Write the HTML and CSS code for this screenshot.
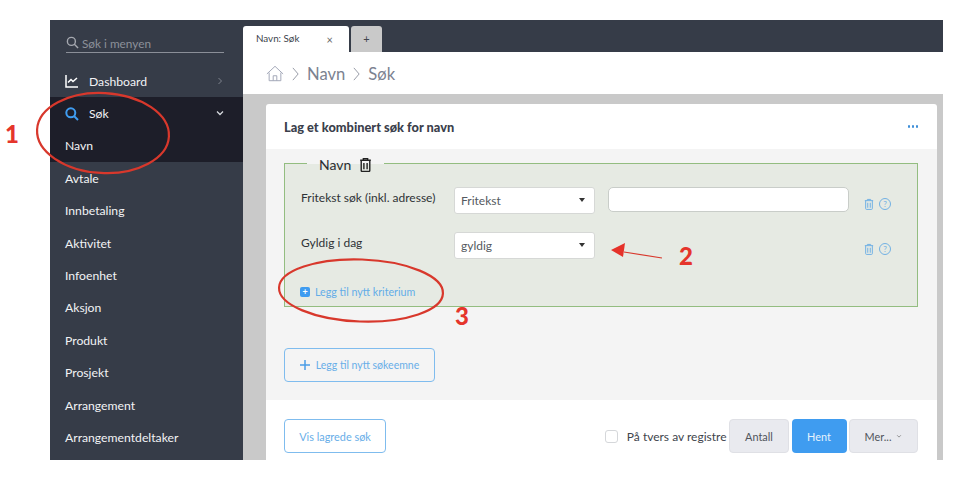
FILE: index.html
```html
<!DOCTYPE html>
<html lang="no">
<head>
<meta charset="utf-8">
<title>Navn: Søk</title>
<link rel="stylesheet" href="styles.css">
</head>
<body>
<div class="app">
  <aside class="sidebar">
    <div class="menu-search">
      <svg class="i-search-small" viewBox="0 0 14 14"><circle cx="5.8" cy="5.8" r="4.3"/><path d="M9 9l4 4"/></svg>
      <span>Søk i menyen</span>
    </div>
    <nav class="menu">
      <div class="item">
        <svg class="i-left" viewBox="0 0 14 14"><path d="M1 1v12h12"/><path d="M3 8.500l3-3 2 2 4-3.500"/></svg>
        <span class="label-ic">Dashboard</span>
        <svg class="chev" viewBox="0 0 8 8"><path d="M2.500 1l3 3-3 3"/></svg>
      </div>
      <div class="group">
        <div class="item">
          <svg class="i-left i-blue" viewBox="0 0 14 14"><circle cx="5.800" cy="5.800" r="4.500"/><path d="M9 9l4 4"/></svg>
          <span class="label-ic">Søk</span>
          <svg class="chev chev-open" viewBox="0 0 8 8"><path d="M1 2.500l3 3 3-3"/></svg>
        </div>
        <div class="item">Navn</div>
      </div>
      <div class="item">Avtale</div>
      <div class="item">Innbetaling</div>
      <div class="item">Aktivitet</div>
      <div class="item">Infoenhet</div>
      <div class="item">Aksjon</div>
      <div class="item">Produkt</div>
      <div class="item">Prosjekt</div>
      <div class="item">Arrangement</div>
      <div class="item">Arrangementdeltaker</div>
    </nav>
  </aside>
  <main class="main">
    <div class="tabs">
      <div class="tab tab-active"><span>Navn: Søk</span><span class="tab-x">×</span></div>
      <div class="tab tab-add">+</div>
    </div>
    <div class="crumbs">
      <svg class="i-home" viewBox="0 0 20 18"><path d="M1 9.500L10 1l9 8.500"/><path d="M3.500 8v9h13V8"/><path d="M8 17v-5.500h4V17"/></svg>
      <svg class="crumb-sep" viewBox="0 0 8 16"><path d="M1 1l6 7-6 7"/></svg>
      <span>Navn</span>
      <svg class="crumb-sep" viewBox="0 0 8 16"><path d="M1 1l6 7-6 7"/></svg>
      <span>Søk</span>
    </div>
    <div class="content">
      <section class="card">
        <header class="card-head">
          <h1>Lag et kombinert søk for navn</h1>
          <span class="dots"><i></i><i></i><i></i></span>
        </header>
        <div class="card-body">
          <fieldset class="criteria">
            <legend>
              <span>Navn</span>
              <svg class="i-trash i-trash-dark" viewBox="0 0 12 14"><path d="M1 3h10M4 3V1.500h4V3M2 3v9.500a1 1 0 0 0 1 1h6a1 1 0 0 0 1-1V3M4.500 5.500v6M7.500 5.500v6"/></svg>
            </legend>
            <div class="row row-first">
              <label>Fritekst søk (inkl. adresse)</label>
              <div class="select"><span>Fritekst</span><i class="caret"></i></div>
              <div class="input"></div>
              <div class="row-icons">
                <svg class="i-trash" viewBox="0 0 12 14"><path d="M1 3h10M4 3V1.500h4V3M2 3v9.500a1 1 0 0 0 1 1h6a1 1 0 0 0 1-1V3M4.500 5.500v6M7.500 5.500v6"/></svg>
                <span class="help">?</span>
              </div>
            </div>
            <div class="row">
              <label>Gyldig i dag</label>
              <div class="select"><span>gyldig</span><i class="caret"></i></div>
              <div class="spacer"></div>
              <div class="row-icons">
                <svg class="i-trash" viewBox="0 0 12 14"><path d="M1 3h10M4 3V1.500h4V3M2 3v9.500a1 1 0 0 0 1 1h6a1 1 0 0 0 1-1V3M4.500 5.500v6M7.500 5.500v6"/></svg>
                <span class="help">?</span>
              </div>
            </div>
            <div class="add-criterion"><span class="plus-box">+</span><span>Legg til nytt kriterium</span></div>
          </fieldset>
          <button class="btn-outline btn-add" type="button"><svg class="plus" viewBox="0 0 10 10"><path d="M5 0v10M0 5h10"/></svg>Legg til nytt søkeemne</button>
        </div>
        <footer class="card-foot">
          <button class="btn-outline btn-saved" type="button">Vis lagrede søk</button>
          <div class="foot-right">
            <span class="check"></span>
            <span class="check-label">På tvers av registre</span>
            <button class="btn-gray btn-count" type="button">Antall</button>
            <button class="btn-primary" type="button">Hent</button>
            <button class="btn-gray btn-more" type="button">Mer... <svg viewBox="0 0 8 8"><path d="M1.500 3l2.500 2.500L6.500 3"/></svg></button>
          </div>
        </footer>
      </section>
    </div>
  </main>
</div>
<svg class="marks" viewBox="0 0 960 488">
  <ellipse cx="103" cy="133" rx="66" ry="40" transform="rotate(3 103 133)"/>
  <ellipse cx="361" cy="290.500" rx="82" ry="31" transform="rotate(2 361 290.500)"/>
  <path class="thin" d="M662 258l-38-6"/>
  <path class="fill" d="M611 250l14-7-2 14z"/>
</svg>
<span class="num num-1">1</span>
<span class="num num-2">2</span>
<span class="num num-3">3</span>
</body>
</html>
```
FILE: styles.css
```css
* { box-sizing: border-box; }
html, body { margin: 0; height: 100%; }
body {
  position: relative;
  width: 960px;
  height: 488px;
  padding: 20px 17px 28px 50px;
  background: #fff;
  font-family: Lato, "Open Sans", sans-serif;
  overflow: hidden;
}
.app { display: flex; height: 440px; overflow: hidden; }

.sidebar { width: 193px; flex: none; background: #363c48; color: #f2f3f5; font-size: 12.200px; }
.menu-search {
  display: flex; align-items: center; gap: 3px;
  margin: 15px 19px 0 16px; height: 18px;
  border-bottom: 1px solid #8b8f98; color: #8d919a; font-size: 11.800px;
}
.i-search-small { width: 13px; height: 13px; margin-top: -2px; fill: none; stroke: #a6a9b0; stroke-width: 1.500; }
.menu { margin-top: 12px; }
.item { display: flex; align-items: center; height: 32.400px; padding: 0 19px 0 15px; }
.group { background: #1d1e29; }
.i-left { width: 14px; height: 14px; margin-right: 10px; fill: none; stroke: #fff; stroke-width: 1.500; }
.i-blue { stroke: #3f9cf0; stroke-width: 2; }
.label-ic { flex: 1; }
.chev { width: 8px; height: 8px; fill: none; stroke: #7e838d; stroke-width: 1; }
.chev-open { stroke: #d5d8dd; stroke-width: 1.300; margin-top: -2px; }

.main { flex: 1; min-width: 0; display: flex; flex-direction: column; background: #c9c9c9; }
.tabs { height: 32px; flex: none; display: flex; align-items: flex-end; gap: 2px; background: #363c48; }
.tab { height: 26px; border-radius: 3px 3px 0 0; font-size: 9.800px; color: #40444c; }
.tab-active { width: 106px; background: #fff; display: flex; align-items: center; justify-content: space-between; padding: 0 16px 2px 13px; }
.tab-x { font-size: 11px; color: #666; margin-top: 3px; }
.tab-add { width: 31px; background: #c9c9c9; display: flex; align-items: center; justify-content: center; font-size: 11px; padding-bottom: 2px; }
.crumbs { height: 42px; flex: none; background: #fff; display: flex; align-items: center; gap: 8px; padding: 1px 0 0 23px; color: #7b8290; font-size: 16.600px; }
.i-home { width: 18px; height: 17px; fill: none; stroke: #a3a8b8; stroke-width: 1.100; }
.crumb-sep { width: 7px; height: 14px; fill: none; stroke: #8a8f9b; stroke-width: 1; }

.content { flex: 1; min-height: 0; padding: 10px 6px 0 23px; }
.card { height: 100%; background: #fff; border-radius: 3px 3px 0 0; display: flex; flex-direction: column; }
.card-head { height: 45px; flex: none; display: flex; align-items: center; justify-content: space-between; padding: 0 19px 0 18px; }
.card-head h1 { margin: 0; font-size: 12.800px; font-weight: 900; color: #3b3f4c; }
.dots { display: flex; gap: 1.500px; }
.dots i { width: 2.500px; height: 2.500px; border-radius: 50%; background: #3f8fd8; }
.card-body { height: 251px; flex: none; background: #f4f4f4; padding: 14px 19px 0 18px; }
.criteria {
  margin: 0; padding: 0; height: 144px; min-width: 0;
  border: 1px solid #93bd80; background: #e6eae3;
  position: relative;
}
.criteria legend {
  position: absolute; top: -8px; left: 22px; padding: 0 12px;
  display: flex; align-items: center; gap: 8px; height: 16px;
  background: linear-gradient(#f4f4f4 50%, #e6eae3 50%); font-size: 14px; color: #2c2e33;
}
.i-trash { width: 10px; height: 12px; fill: none; stroke: #72b1e4; stroke-width: 1.200; }
.i-trash-dark { width: 13px; height: 15px; stroke: #222; stroke-width: 1.300; }
.row { display: flex; align-items: flex-start; margin-left: 16px; height: 45px; }
.row-first { margin-top: 23px; }
.row label { width: 153px; flex: none; font-size: 12px; color: #2f3236; padding-top: 3px; }
.select {
  width: 141px; height: 27px; flex: none; display: flex; align-items: center; justify-content: space-between;
  padding: 0 9px 1px 6px; background: #fff; border: 1px solid #d6d8d6; border-radius: 3px;
  font-size: 12px; color: #555a60;
}
.caret { width: 0; height: 0; border: 3.500px solid transparent; border-top: 4px solid #333; border-bottom: 0; }
.input { width: 241px; height: 25px; flex: none; margin-left: 13px; background: #fff; border: 1px solid #c9cdc9; border-radius: 5px; }
.spacer { width: 241px; flex: none; margin-left: 13px; }
.row-icons { display: flex; align-items: center; gap: 5px; margin: 11px 0 0 15px; }
.help {
  width: 12px; height: 12px; border: 1px solid #72b1e4; border-radius: 50%;
  display: flex; align-items: center; justify-content: center;
  font-size: 8px; color: #72b1e4;
}
.add-criterion { display: flex; align-items: center; gap: 5px; margin: 8px 0 0 15px; font-size: 10.700px; color: #63ade8; }
.plus-box {
  width: 10px; height: 10px; border-radius: 2px; background: #3f9cf0; color: #fff;
  display: flex; align-items: center; justify-content: center; font-size: 9px; font-weight: 700;
}
.btn-outline {
  display: flex; align-items: center; justify-content: center; height: 34px; padding: 0;
  font: inherit; font-size: 10.900px; color: #68aee8; background: #fff;
  border: 1px solid #7fbcee; border-radius: 4px;
}
.btn-add { width: 151px; margin-top: 41px; background: transparent; font-size: 10.500px; gap: 6px; }
.plus { width: 10px; height: 10px; fill: none; stroke: #4b9de6; stroke-width: 1.500; }
.card-foot { flex: 1; display: flex; justify-content: space-between; align-items: flex-start; padding: 19px 19px 0 18px; }
.btn-saved { width: 102px; }
.foot-right { display: flex; align-items: center; gap: 2.500px; height: 34px; }
.check { width: 13px; height: 13px; border: 1px solid #d5d7da; border-radius: 3px; background: #fff; margin-right: 6px; }
.check-label { font-size: 12px; color: #40444c; }
.btn-gray, .btn-primary {
  height: 34px; padding: 0; font: inherit; font-size: 10.900px; border-radius: 4px;
  display: flex; align-items: center; justify-content: center;
}
.btn-gray { background: #e9eaef; border: 1px solid #dfe0e5; color: #50545c; }
.btn-count { width: 60px; }
.btn-primary { width: 55px; background: #3f9cf0; border: 0; color: #e6f2fd; }
.btn-more { width: 69px; gap: 5px; }
.btn-more svg { width: 6px; height: 6px; fill: none; stroke: #777; stroke-width: 1; }

.marks { position: absolute; left: 0; top: 0; width: 960px; height: 488px; pointer-events: none; fill: none; stroke: #d8382c; stroke-width: 2.200; }
.marks .thin { stroke-width: 1.200; }
.marks .fill { fill: #e5322a; stroke: none; }
.num { position: absolute; font-family: Lato, sans-serif; font-size: 24px; font-weight: 900; color: #e5352b; line-height: 1; }
.num-1 { left: 5px; top: 122px; }
.num-2 { left: 679px; top: 244px; }
.num-3 { left: 455px; top: 304px; }
```
